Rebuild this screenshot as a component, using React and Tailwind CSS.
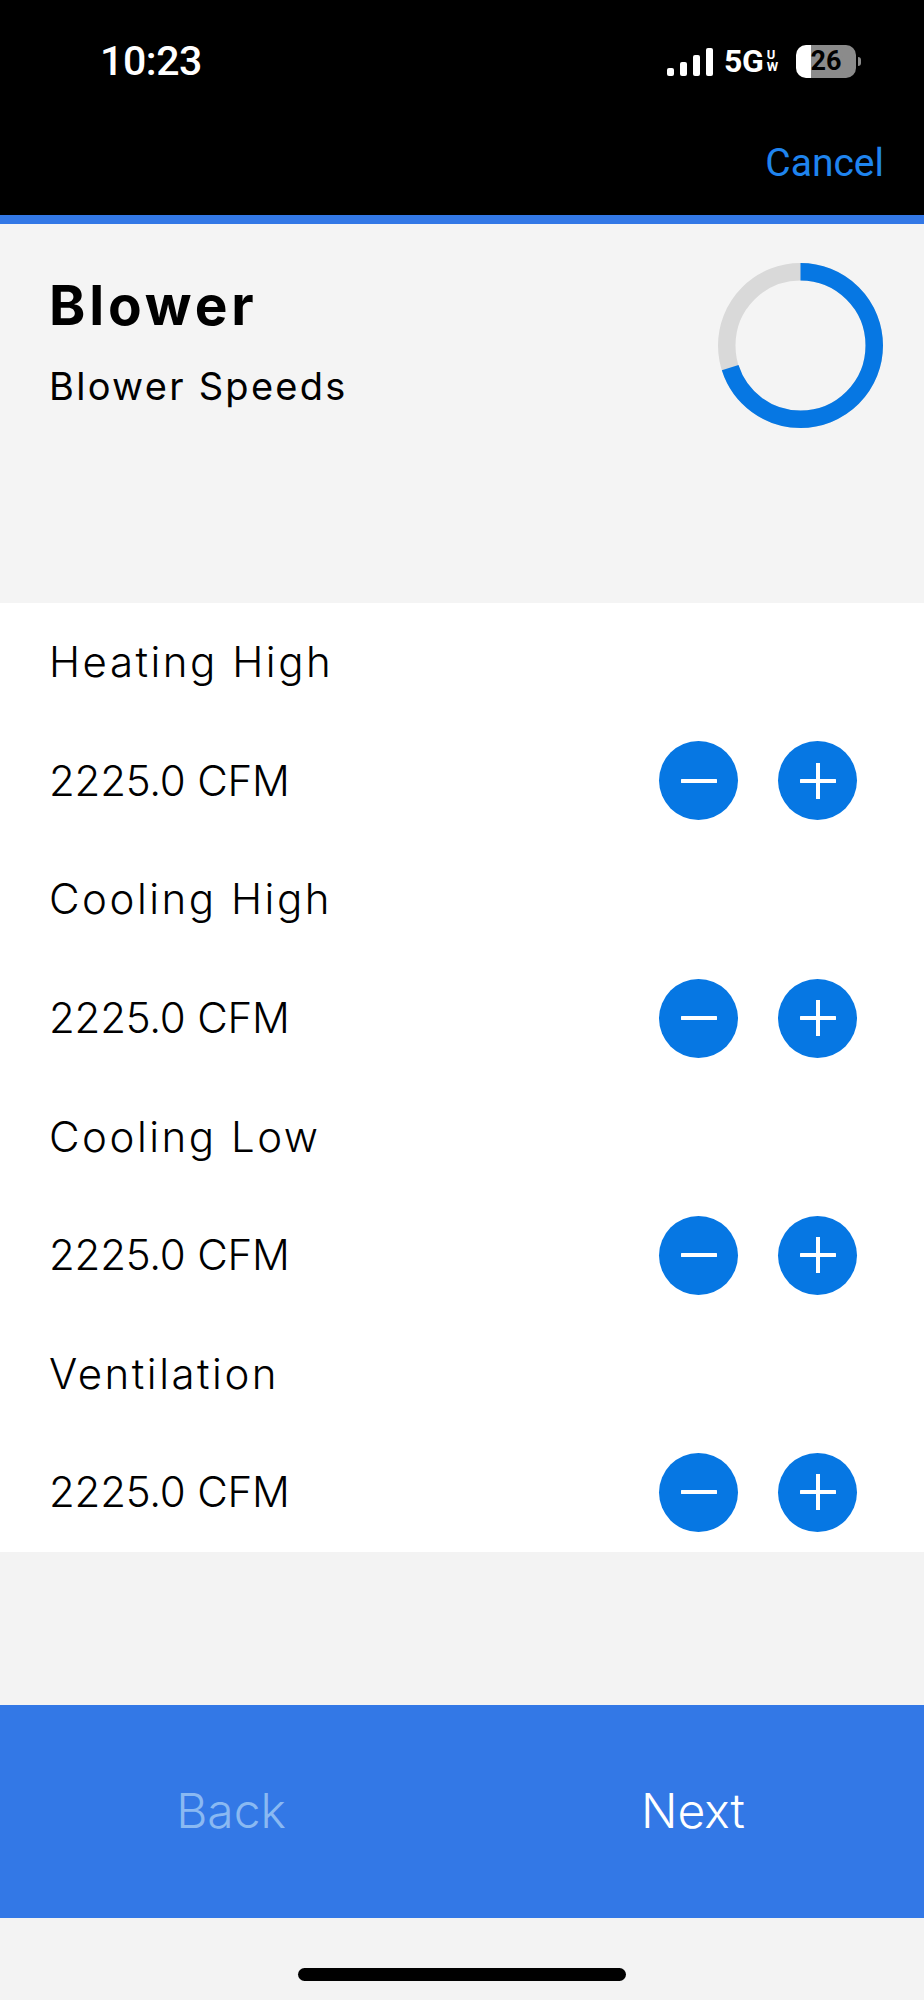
import { useState } from "react";

const rows = [
  { label: "Heating High", value: 2225.0 },
  { label: "Cooling High", value: 2225.0 },
  { label: "Cooling Low", value: 2225.0 },
  { label: "Ventilation", value: 2225.0 },
];

function StatusBar() {
  return (
    <div className="flex h-[122px] items-center justify-between pl-[100px] pr-[63px]">
      <span className="font-['Roboto',sans-serif] text-[41px] font-medium leading-none tracking-[-0.01em] text-white">
        10:23
      </span>

      <div className="flex items-center">
        <div className="flex items-end gap-[6px] pt-[2px]">
          <div className="h-[8px] w-[7px] rounded-[2px] bg-white" />
          <div className="h-[14px] w-[7px] rounded-[2px] bg-white" />
          <div className="h-[21px] w-[7px] rounded-[2px] bg-white" />
          <div className="h-[28px] w-[7px] rounded-[2px] bg-white" />
        </div>

        <span className="ml-[11px] font-['Roboto',sans-serif] text-[32px] font-bold leading-none tracking-[-0.01em] text-white">
          5G
        </span>
        <div className="ml-[3px] flex flex-col font-['Roboto',sans-serif] text-[13px] font-bold leading-[12px] text-white">
          <span>U</span>
          <span>W</span>
        </div>

        <div className="ml-[18px] flex h-[33px] w-[60px] items-center justify-center rounded-[10px] bg-linear-to-r from-white from-[25%] to-[#8b8b8b] to-[25%] font-['Roboto',sans-serif] text-[27px] font-bold leading-none text-black">
          26
        </div>
        <div className="ml-[2px] h-[9px] w-[3px] rounded-r-full bg-[#8b8b8b]" />
      </div>
    </div>
  );
}

function ProgressRing({ progress }) {
  const r = 73.75;
  const c = 2 * Math.PI * r;

  return (
    <svg width="165" height="165" viewBox="0 0 165 165">
      <circle cx="82.5" cy="82.5" r={r} fill="none" stroke="#d9d9d9" strokeWidth="17.5" />
      <circle
        cx="82.5"
        cy="82.5"
        r={r}
        fill="none"
        stroke="#0677e3"
        strokeWidth="17.5"
        strokeDasharray={`${c * progress} ${c}`}
        transform="rotate(-90 82.5 82.5)"
      />
    </svg>
  );
}

function RoundButton({ kind, onClick }) {
  return (
    <button
      onClick={onClick}
      className="flex h-[79px] w-[79px] items-center justify-center rounded-full bg-[#0677e3]"
    >
      <svg width="36" height="36" viewBox="0 0 36 36">
        <line x1="1" y1="18" x2="35" y2="18" stroke="white" strokeWidth="4" strokeLinecap="round" />
        {kind === "plus" && (
          <line x1="18" y1="0" x2="18" y2="36" stroke="white" strokeWidth="4" strokeLinecap="round" />
        )}
      </svg>
    </button>
  );
}

export default function App() {
  const [values, setValues] = useState(rows.map((r) => r.value));

  function change(i, delta) {
    setValues((prev) => prev.map((v, j) => (j === i ? v + delta : v)));
  }

  return (
    <main className="flex h-[2000px] w-[924px] flex-col bg-[#f3f3f3] font-['Inter',sans-serif]">
      <div className="h-[215px] bg-black">
        <StatusBar />
        <div className="flex h-[82px] items-center justify-end pr-[40px]">
          <button className="font-['Roboto',sans-serif] text-[39px] leading-none text-[#1f84ee]">
            Cancel
          </button>
        </div>
      </div>

      <div className="h-[9px] bg-[#3378e6]" />

      <div className="flex h-[379px] justify-between bg-[#f4f4f4] pl-[49px] pr-[41px] pt-[39px]">
        <div className="pt-[14.5px]">
          <h1 className="text-[55px] font-bold leading-none tracking-[0.07em] text-black">
            Blower
          </h1>
          <p className="mt-[34.5px] text-[38px] leading-none tracking-[0.06em] text-black">
            Blower Speeds
          </p>
        </div>
        <ProgressRing progress={0.7} />
      </div>

      <div className="flex flex-col bg-white pl-[49px] pr-[67px]">
        {rows.map((row, i) => (
          <div key={row.label}>
            <div className="flex h-[118.6px] items-center">
              <span className="text-[42px] font-light leading-none tracking-[0.06em] text-black">
                {row.label}
              </span>
            </div>
            <div className="flex h-[118.6px] items-center justify-between">
              <span className="text-[42px] font-light leading-none tracking-[-0.005em] text-black">
                {values[i].toFixed(1)} CFM
              </span>
              <div className="flex gap-[40px]">
                <RoundButton kind="minus" onClick={() => change(i, -25)} />
                <RoundButton kind="plus" onClick={() => change(i, 25)} />
              </div>
            </div>
          </div>
        ))}
      </div>

      <div className="h-[153px]" />

      <div className="flex h-[213px] bg-[#3378e6]">
        <button className="flex flex-1 items-center justify-center text-[48px] font-light leading-none text-[#8ab9f2]">
          Back
        </button>
        <button className="flex flex-1 items-center justify-center text-[48px] font-light leading-none text-white">
          Next
        </button>
      </div>

      <div className="flex flex-1 justify-center pt-[50px]">
        <div className="h-[13px] w-[328px] rounded-full bg-black" />
      </div>
    </main>
  );
}
